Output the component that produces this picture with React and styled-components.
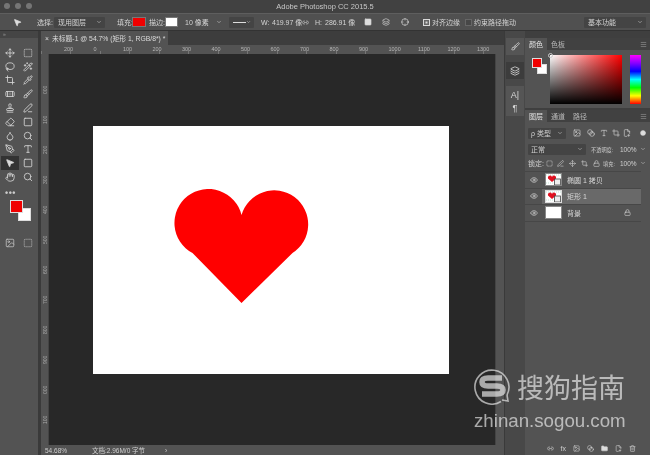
import React from 'react';
import styled, { createGlobalStyle } from 'styled-components';
import {
  Move, BoxSelect, Lasso, Wand2, Crop, Pipette, Bandage, Brush, Stamp, PenLine,
  Eraser, Droplet, Search, PenTool, Type, MousePointer2, Square, Hand, Eye, Lock,
  Link2, Trash2, Folder, FilePlus2, Circle, ChevronDown, Image, Blend, Crosshair, Layers, Menu,
} from 'lucide-react';

const Global = createGlobalStyle`
  html, body { margin: 0; padding: 0; background: #535353; }
  * { box-sizing: border-box; }
  body { font-family: "Liberation Sans", "Noto Sans CJK SC", sans-serif; }
`;

const Frame = styled.div`
  position: relative;
  width: 650px;
  height: 455px;
  overflow: hidden;
  display: flex;
  flex-direction: column;
  background: #535353;
  color: #d4d4d4;
  font-size: 7px;
  filter: blur(0.3px);
`;

const TitleBar = styled.div`
  height: 13px;
  flex: none;
  position: relative;
  display: flex;
  align-items: center;
  justify-content: center;
  background: #414141;
  color: #c8c8c8;
  font-size: 7.5px;
`;

const Lights = styled.div`
  position: absolute;
  left: 4px;
  top: 3px;
  display: flex;
  gap: 5px;
`;

const Light = styled.span`
  width: 6px;
  height: 6px;
  border-radius: 50%;
  background: #757575;
`;

const OptionsBar = styled.div`
  height: 18px;
  flex: none;
  display: flex;
  align-items: center;
  padding-left: 13px;
  background: #505050;
  border-top: 1px solid #5e5e5e;
  border-bottom: 1px solid #333;
  white-space: nowrap;
`;

const Opt = styled.div`
  flex: none;
  display: flex;
  align-items: center;
  justify-content: ${p => p.$center ? 'center' : 'flex-start'};
  width: ${p => p.$w}px;
  margin-left: ${p => p.$ml || 0}px;
  gap: 2px;
`;

const Select = styled.div`
  flex: none;
  display: flex;
  align-items: center;
  justify-content: space-between;
  width: ${p => p.$w}px;
  height: 11px;
  margin-left: ${p => p.$ml || 0}px;
  padding: 0 3px 0 4px;
  background: ${p => p.$flat ? 'transparent' : '#444'};
  border-radius: 1px;
`;

const LineSample = styled.span`
  width: 15px;
  border-top: 1px solid #ddd;
`;

const Swatch = styled.span`
  flex: none;
  width: ${p => p.$w}px;
  height: 10px;
  margin-left: ${p => p.$ml || 0}px;
  background: ${p => p.$c};
  border: 1px solid #777;
`;

const Check = styled.span`
  flex: none;
  width: 7px;
  height: 7px;
  margin-left: ${p => p.$ml}px;
  background: ${p => p.$on ? '#d9d9d9' : '#474747'};
  border: 1px solid ${p => p.$on ? '#d9d9d9' : '#666'};
  box-shadow: ${p => p.$on ? 'inset 0 0 0 1.5px #666' : 'none'};
`;

const Workspace = styled.div`
  flex: 1;
  min-height: 0;
  display: flex;
`;

const Tools = styled.div`
  flex: none;
  width: 38px;
  display: flex;
  flex-direction: column;
  background: #535353;
`;

const Grip = styled.div`
  height: 7px;
  flex: none;
  background: #454545;
  color: #999;
  font-size: 5px;
  line-height: 7px;
  padding-left: 3px;
`;

const ToolGrid = styled.div`
  display: grid;
  grid-template-columns: 18px 18px;
  grid-auto-rows: 13.8px;
  justify-content: center;
  margin-top: 8px;
`;

const Tool = styled.div`
  display: flex;
  align-items: center;
  justify-content: center;
  color: #d6d6d6;
  background: ${p => p.$active ? '#333' : 'transparent'};
`;

const Dots = styled.div`
  margin: 5px 0 0 5px;
  color: #ccc;
  font-size: 9px;
  line-height: 8px;
  font-weight: 700;
  letter-spacing: 0.5px;
`;

const Colors = styled.div`
  position: relative;
  width: 24px;
  height: 24px;
  margin: 3px 0 0 10px;
`;

const Chip = styled.span`
  position: absolute;
  width: ${p => p.$s}px;
  height: ${p => p.$s}px;
  left: ${p => p.$x}px;
  top: ${p => p.$y}px;
  background: ${p => p.$c};
  border: 1px solid #ddd;
`;

const ModeRow = styled.div`
  display: flex;
  justify-content: center;
  gap: 8px;
  margin-top: 14px;
  color: #bdbdbd;
`;

const Gutter = styled.div`
  flex: none;
  width: 3px;
  background: #3a3a3a;
`;

const DocArea = styled.div`
  flex: none;
  width: 463px;
  display: flex;
  flex-direction: column;
  background: #3e3e3e;
`;

const TabRow = styled.div`
  height: 14px;
  flex: none;
  display: flex;
  background: #3d3d3d;
`;

const DocTab = styled.div`
  width: 127px;
  display: flex;
  align-items: center;
  gap: 3px;
  padding-left: 4px;
  background: #535353;
  color: #dcdcdc;
  font-size: 6.8px;
  white-space: nowrap;
`;

const RulerTop = styled.div`
  height: 9px;
  flex: none;
  display: flex;
  background: #535353 repeating-linear-gradient(90deg, #777 0 1px, transparent 1px 29.5px) 0 bottom / 100% 3px no-repeat;
  color: #b5b5b5;
  font-size: 5.5px;
  line-height: 8px;
  padding-left: 23px;
  overflow: hidden;
`;

const RulerMark = styled.span`
  flex: none;
  width: 29.5px;
`;

const DocBody = styled.div`
  flex: 1;
  min-height: 0;
  display: flex;
`;

const RulerLeft = styled.div`
  width: 8px;
  flex: none;
  display: flex;
  flex-direction: column;
  align-items: center;
  padding-top: 10px;
  background: #535353;
  border-right: 1px solid #444;
  color: #aaa;
  font-size: 5px;
  overflow: hidden;
`;

const RulerLeftMark = styled.span`
  flex: none;
  height: 30px;
  writing-mode: vertical-rl;
  transform: rotate(180deg);
`;

const Canvas = styled.div`
  flex: 1;
  display: flex;
  align-items: center;
  justify-content: center;
  padding-right: 2px;
  background: #282828;
`;

const Page = styled.div`
  width: 356px;
  height: 248px;
  background: #fff;
  padding: 63px 0 0 81px;
`;

const HeartShape = styled.svg`
  display: block;
`;

const ScrollBar = styled.div`
  width: 9px;
  flex: none;
  background: #535353;
  border-left: 1px solid #444;
`;

const StatusBar = styled.div`
  height: 10px;
  flex: none;
  display: flex;
  align-items: center;
  padding-left: 4px;
  background: #535353;
  color: #cfcfcf;
  font-size: 6.5px;
`;

const Dock = styled.div`
  flex: none;
  width: 21px;
  display: flex;
  flex-direction: column;
  align-items: center;
  gap: 7px;
  padding-top: 7px;
  background: #484848;
  border-left: 1px solid #3a3a3a;
  color: #d8d8d8;
`;

const DockBtn = styled.div`
  width: 18px;
  height: ${p => p.$h}px;
  display: flex;
  flex-direction: column;
  align-items: center;
  justify-content: center;
  gap: 3px;
  background: ${p => p.$dark ? '#3c3c3c' : '#555'};
  font-size: 9px;
`;

const Panels = styled.div`
  flex: 1;
  min-width: 0;
  display: flex;
  flex-direction: column;
  background: #3f3f3f;
  padding-top: 7px;
`;

const Tabs = styled.div`
  height: 12px;
  flex: none;
  display: flex;
  align-items: stretch;
  background: #414141;
  color: #bdbdbd;
  font-size: 7px;
`;

const TabItem = styled.div`
  display: flex;
  align-items: center;
  padding: 0 4px;
  background: ${p => p.$active ? '#535353' : 'transparent'};
  color: ${p => p.$active ? '#e4e4e4' : '#b8b8b8'};
`;

const TabMenu = styled.div`
  margin-left: auto;
  padding-right: 3px;
  display: flex;
  align-items: center;
  color: #999;
`;

const ColorBody = styled.div`
  height: 58px;
  flex: none;
  display: flex;
  padding: 5px 0 0 7px;
  background: #535353;
  margin-bottom: 2px;
`;

const ColorChips = styled.div`
  position: relative;
  width: 18px;
  height: 18px;
  flex: none;
  margin-top: 3px;
`;

const Field = styled.div`
  position: relative;
  width: 72px;
  height: 49px;
  background:
    linear-gradient(to top, #000, transparent),
    linear-gradient(to right, #fff, #f00);
`;

const FieldDot = styled.span`
  position: absolute;
  left: -2px;
  top: -2px;
  width: 5px;
  height: 5px;
  border-radius: 50%;
  border: 1px solid #ccc;
`;

const Hue = styled.div`
  width: 11px;
  height: 49px;
  margin-left: 8px;
  background: linear-gradient(to bottom, #f0f, #80f, #00f, #0ff, #0f0, #ff0, #f00);
`;

const LayersBody = styled.div`
  flex: 1;
  min-height: 0;
  display: flex;
  flex-direction: column;
  padding-top: 2px;
  background: #535353;
`;

const Row = styled.div`
  height: ${p => p.$h}px;
  flex: none;
  display: flex;
  align-items: center;
  padding-left: 3px;
  color: #cfcfcf;
  white-space: nowrap;
`;

const Mini = styled.div`
  flex: none;
  display: flex;
  align-items: center;
  justify-content: space-between;
  width: ${p => p.$w}px;
  height: 11px;
  padding: 0 3px;
  background: #444;
  border-radius: 1px;
`;

const Cell = styled.span`
  flex: none;
  display: flex;
  align-items: center;
  justify-content: ${p => p.$left ? 'flex-start' : 'center'};
  width: ${p => p.$w}px;
  margin-left: ${p => p.$ml || 0}px;
  font-size: ${p => p.$fs || 7}px;
`;

const LayerList = styled.div`
  margin-top: 1px;
  display: flex;
  flex-direction: column;
  border-top: 1px solid #474747;
  width: 116px;
`;

const Layer = styled.div`
  height: 16.5px;
  display: flex;
  align-items: center;
  border-bottom: 1px solid #474747;
  color: #d8d8d8;
  font-size: 7px;
`;

const EyeCell = styled.div`
  flex: none;
  width: 17px;
  height: 100%;
  padding-left: 5px;
  display: flex;
  align-items: center;
`;

const LayerMain = styled.div`
  flex: 1;
  height: 100%;
  display: flex;
  align-items: center;
  gap: 5px;
  padding: 0 10px 0 3px;
  background: ${p => p.$active ? '#696969' : 'transparent'};
`;

const Thumb = styled.div`
  flex: none;
  display: flex;
  width: 17px;
  height: 13px;
  align-items: center;
  justify-content: center;
  background: #fff;
  border: 1px solid ${p => p.$active ? '#ddd' : '#888'};
`;

const Spacer = styled.div`
  flex: 1;
`;

const LayerActions = styled.div`
  height: 13px;
  flex: none;
  display: flex;
  align-items: center;
  justify-content: flex-end;
  gap: 7px;
  margin-top: auto;
  padding-right: 14px;
  color: #cfcfcf;
`;

const Watermark = styled.div`
  position: absolute;
  left: 474px;
  top: 368px;
  width: 156px;
  color: rgba(255, 255, 255, 0.6);
  pointer-events: none;
`;

const MarkTop = styled.div`
  display: flex;
  align-items: center;
  gap: 6px;
`;

const MarkName = styled.div`
  font-family: "Noto Sans CJK SC", sans-serif;
  font-size: 27px;
  line-height: 36px;
  white-space: nowrap;
`;

const MarkUrl = styled.div`
  margin-top: 5px;
  font-size: 18.7px;
  line-height: 22px;
  white-space: nowrap;
`;

const rulerNums = ['200', '0', '100', '200', '300', '400', '500', '600', '700', '800', '900', '1000', '1100', '1200', '1300'];
const leftNums = ['0', '1', '2', '3', '4', '5', '6', '7', '8', '9', '0', '1'];

const toolIcons = [
  [Move], [BoxSelect], [Lasso], [Wand2], [Crop], [Pipette], [Bandage], [Brush], [Stamp], [PenLine],
  [Eraser], [Square], [Droplet], [Search], [PenTool], [Type], [MousePointer2, true], [Square], [Hand], [Search],
];

function Heart() {
  return (
    <HeartShape width="135" height="114" viewBox="0 0 135 114">
      <path fill="#ff0000" d="M67.5 114 L18.5 64 A34 34 0 1 1 67.5 26 A34 34 0 1 1 118.5 64 Z" />
    </HeartShape>
  );
}

function ThumbArt() {
  return (
    <svg width="15" height="11" viewBox="0 0 15 11">
      <path fill="none" stroke="#9cb" strokeWidth="0.6" strokeDasharray="1 1" d="M0 1h15M0 9h15" />
      <path fill="#e01020" d="M6 8 L2 4.5 A2 2 0 0 1 6 3 A2 2 0 0 1 10 4.5 Z" />
      <rect x="8.5" y="5" width="6" height="6" fill="#eee" stroke="#444" strokeWidth="0.8" />
    </svg>
  );
}

function SogouLogo() {
  return (
    <svg width="37" height="37" viewBox="0 0 37 37" fill="none" stroke="currentColor">
      <path strokeWidth="1.6" d="M27 33.5 A17 17 0 1 1 33 27" />
      <path strokeWidth="1.6" d="M33 27 L34 33 L28 32" />
      <path strokeWidth="5.5" d="M28 10 H14 Q8 10 8 14 Q8 18 14 18 H23 Q29 18 29 22 Q29 26 23 26 H8" />
    </svg>
  );
}

export default function App() {
  return (
    <Frame>
      <Global />
      <TitleBar>
        <Lights><Light /><Light /><Light /></Lights>
        Adobe Photoshop CC 2015.5
      </TitleBar>
      <OptionsBar>
        <MousePointer2 size={9} fill="#ddd" color="#ddd" />
        <Opt $w={14} $ml={15}>选择:</Opt>
        <Select $w={51} $ml={3}>现用图层<ChevronDown size={6} /></Select>
        <Opt $w={14} $ml={12}>填充:</Opt>
        <Swatch $w={14} $c="#f00000" $ml={1} />
        <Opt $w={14} $ml={3}>描边:</Opt>
        <Swatch $w={13} $c="#fff" $ml={2} />
        <Select $w={44} $flat $ml={3}>10 像素<ChevronDown size={6} /></Select>
        <Select $w={25} $ml={4}><LineSample /><ChevronDown size={6} /></Select>
        <Opt $w={11} $ml={7}>W:</Opt>
        <Opt $w={29}>419.97 像</Opt>
        <Opt $w={8} $center><Link2 size={7} /></Opt>
        <Opt $w={10} $ml={6}>H:</Opt>
        <Opt $w={36}>286.91 像</Opt>
        <Opt $w={12} $ml={1} $center><Square size={8} fill="#ddd" /></Opt>
        <Opt $w={12} $ml={6} $center><Layers size={8} /></Opt>
        <Opt $w={12} $ml={7} $center><Crosshair size={8} /></Opt>
        <Check $on $ml={12} />
        <Opt $w={30} $ml={2}>对齐边缘</Opt>
        <Check $ml={3} />
        <Opt $w={50} $ml={2}>约束路径拖动</Opt>
        <Select $w={62} $ml={60}>基本功能<ChevronDown size={6} /></Select>
      </OptionsBar>
      <Workspace>
        <Tools>
          <Grip>»</Grip>
          <ToolGrid>
            {toolIcons.map(([Icon, active], i) => (
              <Tool key={i} $active={active}>
                <Icon size={10} fill={active ? '#ddd' : 'none'} />
              </Tool>
            ))}
          </ToolGrid>
          <Dots>•••</Dots>
          <Colors>
            <Chip $s={13} $c="#fff" $x={8} $y={8} />
            <Chip $s={13} $c="#f00000" $x={0} $y={0} />
          </Colors>
          <ModeRow><Image size={10} /><BoxSelect size={10} /></ModeRow>
        </Tools>
        <Gutter />
        <DocArea>
          <TabRow>
            <DocTab><span>×</span>未标题-1 @ 54.7% (矩形 1, RGB/8*) *</DocTab>
          </TabRow>
          <RulerTop>
            {rulerNums.map((n, i) => <RulerMark key={i}>{n}</RulerMark>)}
          </RulerTop>
          <DocBody>
            <RulerLeft>
              {leftNums.map((n, i) => <RulerLeftMark key={i}>{n}00</RulerLeftMark>)}
            </RulerLeft>
            <Canvas>
              <Page><Heart /></Page>
            </Canvas>
            <ScrollBar />
          </DocBody>
          <StatusBar>
            <Opt $w={47}>54.68%</Opt>
            <Opt $w={66}>文档:2.96M/0 字节</Opt>
            <Opt $w={10} $ml={7}>›</Opt>
          </StatusBar>
        </DocArea>
        <Dock>
          <DockBtn $h={17}><Brush size={9} /></DockBtn>
          <DockBtn $h={17} $dark><Layers size={10} /></DockBtn>
          <DockBtn $h={30}>
            <span>A|</span>
            <span>¶</span>
          </DockBtn>
        </Dock>
        <Panels>
          <Tabs>
            <TabItem $active>颜色</TabItem>
            <TabItem>色板</TabItem>
            <TabMenu><Menu size={7} /></TabMenu>
          </Tabs>
          <ColorBody>
            <ColorChips>
              <Chip $s={10} $c="#fff" $x={5} $y={6} />
              <Chip $s={10} $c="#f00000" $x={0} $y={0} />
            </ColorChips>
            <Field><FieldDot /></Field>
            <Hue />
          </ColorBody>
          <Tabs>
            <TabItem $active>图层</TabItem>
            <TabItem>通道</TabItem>
            <TabItem>路径</TabItem>
            <TabMenu><Menu size={7} /></TabMenu>
          </Tabs>
          <LayersBody>
            <Row $h={18}>
              <Mini $w={38}>ρ 类型<ChevronDown size={6} /></Mini>
              <Cell $w={10} $ml={6}><Image size={8} /></Cell>
              <Cell $w={10} $ml={4}><Blend size={8} /></Cell>
              <Cell $w={10} $ml={3}><Type size={8} /></Cell>
              <Cell $w={10} $ml={2}><Crop size={8} /></Cell>
              <Cell $w={10} $ml={1}><FilePlus2 size={8} /></Cell>
              <Cell $w={10} $ml={6}><Circle size={6} fill="#ddd" /></Cell>
            </Row>
            <Row $h={14}>
              <Mini $w={58}>正常<ChevronDown size={6} /></Mini>
              <Cell $w={29} $ml={5} $fs={5.2} $left>不透明度:</Cell>
              <Cell $w={17} $fs={6.5} $left>100%</Cell>
              <Cell $w={8} $ml={2}><ChevronDown size={6} /></Cell>
            </Row>
            <Row $h={14}>
              <Cell $w={17} $left>锁定:</Cell>
              <Cell $w={8}><BoxSelect size={7} /></Cell>
              <Cell $w={8} $ml={3}><PenLine size={7} /></Cell>
              <Cell $w={8} $ml={4}><Move size={7} /></Cell>
              <Cell $w={8} $ml={4}><Crop size={7} /></Cell>
              <Cell $w={8} $ml={4}><Lock size={7} /></Cell>
              <Cell $w={17} $ml={3} $fs={5.2} $left>填充:</Cell>
              <Cell $w={17} $fs={6.5} $left>100%</Cell>
              <Cell $w={8} $ml={2}><ChevronDown size={6} /></Cell>
            </Row>
            <LayerList>
              <Layer>
                <EyeCell><Eye size={8} /></EyeCell>
                <LayerMain>
                  <Thumb><ThumbArt /></Thumb>
                  椭圆 1 拷贝
                </LayerMain>
              </Layer>
              <Layer>
                <EyeCell><Eye size={8} /></EyeCell>
                <LayerMain $active>
                  <Thumb $active><ThumbArt /></Thumb>
                  矩形 1
                </LayerMain>
              </Layer>
              <Layer>
                <EyeCell><Eye size={8} /></EyeCell>
                <LayerMain>
                  <Thumb />
                  背景
                  <Spacer />
                  <Lock size={7} />
                </LayerMain>
              </Layer>
            </LayerList>
            <LayerActions>
              <Link2 size={7} />
              <span>fx</span>
              <Image size={7} />
              <Blend size={7} />
              <Folder size={7} fill="#ddd" />
              <FilePlus2 size={7} />
              <Trash2 size={7} />
            </LayerActions>
          </LayersBody>
        </Panels>
      </Workspace>
      <Watermark>
        <MarkTop>
          <SogouLogo />
          <MarkName>搜狗指南</MarkName>
        </MarkTop>
        <MarkUrl>zhinan.sogou.com</MarkUrl>
      </Watermark>
    </Frame>
  );
}
